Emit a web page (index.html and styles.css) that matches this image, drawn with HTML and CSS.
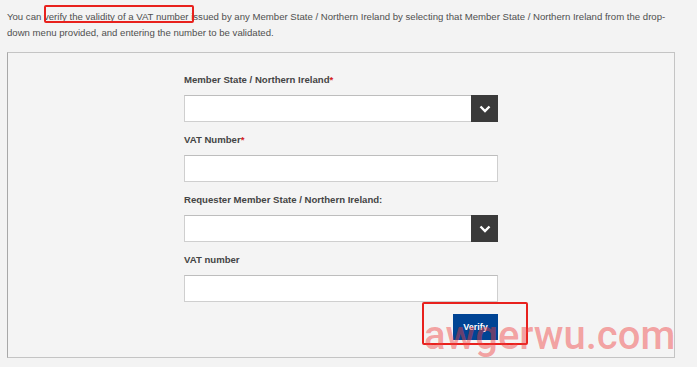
FILE: index.html
```html
<!DOCTYPE html>
<html lang="en">
<head>
<meta charset="utf-8">
<title>VAT validation</title>
<link rel="stylesheet" href="styles.css">
</head>
<body>
<div class="page">
  <p class="intro">You can verify the validity of a VAT number issued by any Member State / Northern Ireland by selecting that Member State / Northern Ireland from the drop-down menu provided, and entering the number to be validated.</p>
  <div class="panel">
    <form class="form">
      <div class="group">
        <label class="label">Member State / Northern Ireland<span class="req">*</span></label>
        <div class="select"><span class="caret"><svg width="12" height="8" viewBox="0 0 12 8"><path d="M1.5 1.5 L6 6 L10.5 1.5" fill="none" stroke="#fff" stroke-width="2.4"/></svg></span></div>
      </div>
      <div class="group">
        <label class="label">VAT Number<span class="req">*</span></label>
        <div class="input"></div>
      </div>
      <div class="group">
        <label class="label">Requester Member State / Northern Ireland:</label>
        <div class="select"><span class="caret"><svg width="12" height="8" viewBox="0 0 12 8"><path d="M1.5 1.5 L6 6 L10.5 1.5" fill="none" stroke="#fff" stroke-width="2.4"/></svg></span></div>
      </div>
      <div class="group">
        <label class="label">VAT number</label>
        <div class="input"></div>
      </div>
      <div class="actions">
        <button type="button" class="btn">Verify</button>
      </div>
    </form>
  </div>
  <div class="mark mark-text"></div>
  <div class="mark mark-btn"></div>
  <div class="watermark">awgerwu.com</div>
</div>
</body>
</html>
```

FILE: styles.css
```css
html, body {
  margin: 0;
  padding: 0;
  background: #f3f3f3;
}
.page {
  position: relative;
  width: 697px;
  height: 367px;
  overflow: hidden;
  font-family: "Liberation Sans", Arial, sans-serif;
}
.intro {
  margin: 9px 0 0 7px;
  width: 676px;
  font-size: 9.6px;
  line-height: 16px;
  color: #4f4f4f;
}
.panel {
  margin: 11px 0 0 7px;
  width: 668px;
  height: 306px;
  border: 1px solid #c4c4c4;
  border-left-color: #a8a8a8;
  background: #f4f4f4;
  box-sizing: border-box;
  display: flex;
  justify-content: center;
}
.form {
  width: 314px;
  padding-top: 20px;
  display: flex;
  flex-direction: column;
}
.group {
  display: flex;
  flex-direction: column;
  margin-bottom: 11px;
}
.label {
  font-size: 9.6px;
  line-height: 14px;
  font-weight: bold;
  color: #444;
  margin-bottom: 8px;
}
.req {
  color: #d42020;
}
.select, .input {
  height: 27px;
  box-sizing: border-box;
  background: #fff;
  border: 1px solid #cfcfcf;
  border-top-color: #bdbdbd;
  display: flex;
  justify-content: flex-end;
}
.caret {
  width: 27px;
  height: 27px;
  margin: -1px -1px 0 0;
  background: #3a3a3a;
  display: flex;
  align-items: center;
  justify-content: center;
}
.actions {
  display: flex;
  justify-content: flex-end;
  margin-top: 1px;
}
.btn {
  width: 45px;
  height: 26px;
  border: 0;
  padding: 0;
  background: #004494;
  color: #fff;
  font-family: "Liberation Sans", Arial, sans-serif;
  font-weight: bold;
  font-size: 9px;
}
.mark {
  position: absolute;
  border: 2px solid #e8211d;
  border-radius: 2px;
  box-sizing: border-box;
}
.mark-text {
  left: 44px;
  top: 5px;
  width: 150px;
  height: 18px;
}
.mark-btn {
  left: 422px;
  top: 302px;
  width: 106px;
  height: 43px;
}
.watermark {
  position: absolute;
  left: 424px;
  top: 316px;
  font-family: Roboto, sans-serif;
  font-weight: 500;
  font-size: 40px;
  line-height: 40px;
  color: rgba(240, 60, 60, 0.45);
  white-space: nowrap;
}
```
